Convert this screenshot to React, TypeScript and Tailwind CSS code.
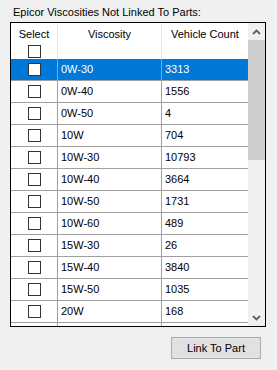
const ROWS: [string, string][] = [
    ['0W-30', '3313'],
    ['0W-40', '1556'],
    ['0W-50', '4'],
    ['10W', '704'],
    ['10W-30', '10793'],
    ['10W-40', '3664'],
    ['10W-50', '1731'],
    ['10W-60', '489'],
    ['15W-30', '26'],
    ['15W-40', '3840'],
    ['15W-50', '1035'],
    ['20W', '168'],
];

function Checkbox() {
    return <div className="h-[13px] w-[13px] border border-[#333333] bg-white" />;
}

function Arrow({ down }: { down?: boolean }) {
    return (
        <div className="flex h-[17px] w-[17px] items-center justify-center">
            <svg width="9" height="6" viewBox="0 0 9 6">
                <polyline
                    points={down ? '1,1 4.5,4.5 8,1' : '1,5 4.5,1.5 8,5'}
                    fill="none"
                    stroke="#606060"
                    strokeWidth="1.8"
                />
            </svg>
        </div>
    );
}

export default function App() {
    return (
        <div className="h-[370px] w-[277px] bg-[#f0f0f0] font-['Liberation_Sans',Arial,sans-serif] text-[11px] text-black">
            <div className="pl-[13px] pt-[5px] leading-[15px]">Epicor Viscosities Not Linked To Parts:</div>

            {/* Grid */}
            <div className="ml-[10px] mt-[2px] flex h-[305px] w-[256px] border border-black bg-white">
                <div className="w-[237px] overflow-hidden">
                    {/* Header */}
                    <div className="flex h-[36px]">
                        <div className="flex w-[47px] flex-col items-center border-r border-[#e5e5e5] pt-[4px]">
                            <span className="leading-[15px]">Select</span>
                            <div className="mt-[3px]">
                                <Checkbox />
                            </div>
                        </div>
                        <div className="w-[104px] border-r border-[#e5e5e5] pt-[4px] text-center leading-[15px]">Viscosity</div>
                        <div className="flex-1 pl-[9px] pt-[4px] leading-[15px]">Vehicle Count</div>
                    </div>

                    {/* Rows */}
                    {ROWS.map(([visc, count], i) => (
                        <div
                            key={visc}
                            className={`flex h-[22px] border-b border-[#a0a0a0] ${i === 0 ? 'bg-[#0078d7] text-white' : ''}`}
                        >
                            <div className="flex w-[47px] items-center justify-center border-r border-[#a0a0a0]">
                                <Checkbox />
                            </div>
                            <div className="flex w-[104px] items-center border-r border-[#a0a0a0] pl-[3px]">{visc}</div>
                            <div className="flex flex-1 items-center pl-[3px]">{count}</div>
                        </div>
                    ))}

                    {/* Partially visible next row */}
                    <div className="flex h-[22px]">
                        <div className="w-[47px] border-r border-[#a0a0a0]" />
                        <div className="w-[104px] border-r border-[#a0a0a0]" />
                    </div>
                </div>

                {/* Scrollbar */}
                <div className="flex w-[17px] flex-col bg-[#f0f0f0]">
                    <Arrow />
                    <div className="h-[120px] w-[17px] bg-[#cdcdcd]" />
                    <div className="flex-1" />
                    <Arrow down />
                </div>
            </div>

            <div className="flex justify-end pr-[16px] pt-[10px]">
                <button className="h-[22px] w-[90px] border border-[#adadad] bg-[#e1e1e1] leading-[18px]">Link To Part</button>
            </div>
        </div>
    );
}
